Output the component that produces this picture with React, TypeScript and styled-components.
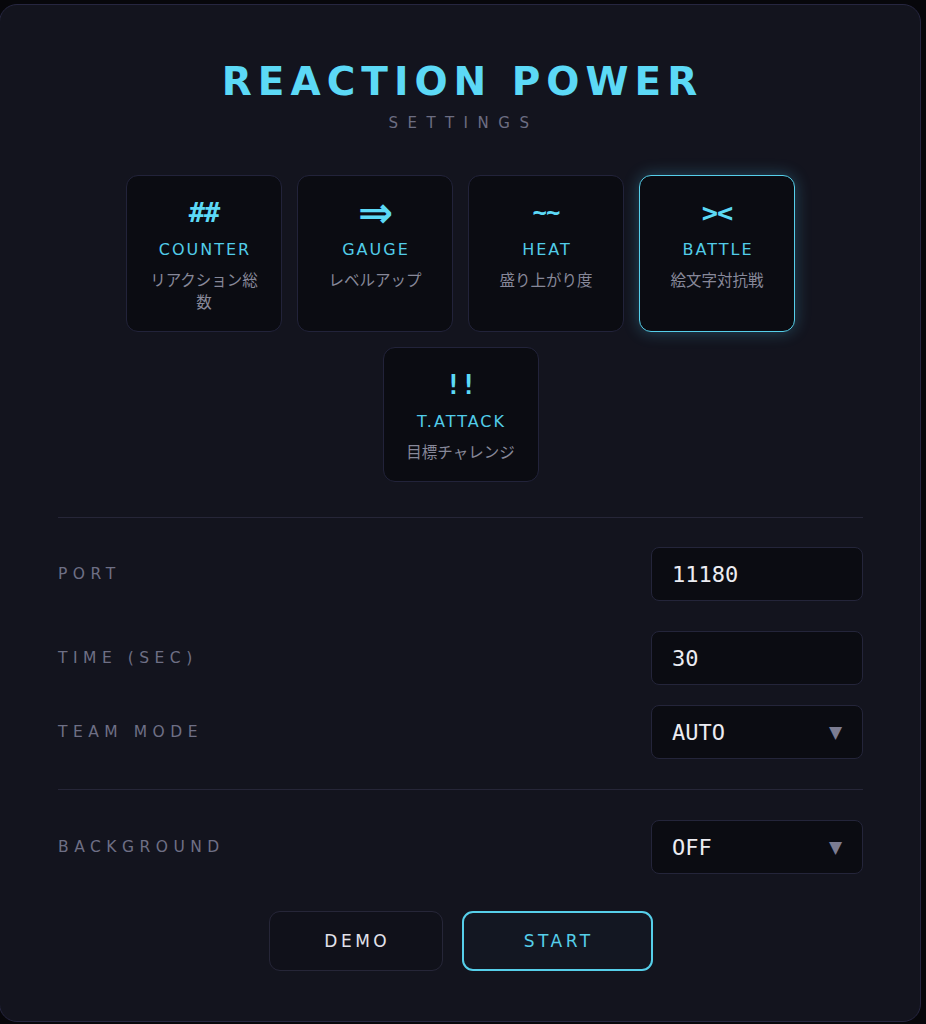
import styled, { createGlobalStyle } from "styled-components";

const GlobalStyle = createGlobalStyle`
  body {
    margin: 0;
    background: #07070b;
    font-family: "DejaVu Sans", "Noto Sans CJK JP", sans-serif;
  }
`;

type Mode = {
  icon: string;
  label: string;
  desc: string;
  iconSize?: number;
  wideIcon?: boolean;
  selected?: boolean;
};

const modes: Mode[] = [
  { icon: "##", label: "COUNTER", desc: "リアクション総数" },
  { icon: "⇒", label: "GAUGE", desc: "レベルアップ", iconSize: 42, wideIcon: true },
  { icon: "~~", label: "HEAT", desc: "盛り上がり度", iconSize: 24 },
  { icon: "><", label: "BATTLE", desc: "絵文字対抗戦", selected: true },
  { icon: "!!", label: "T.ATTACK", desc: "目標チャレンジ" },
];

const App = () => {
  return (
    <>
      <GlobalStyle />
      <Panel>
        <Title>REACTION POWER</Title>
        <Subtitle>SETTINGS</Subtitle>

        <ModeGrid>
          {modes.map((m) => (
            <ModeCard key={m.label} $selected={m.selected}>
              <ModeIcon $size={m.iconSize} $wide={m.wideIcon}>
                {m.icon}
              </ModeIcon>
              <ModeLabel>{m.label}</ModeLabel>
              <ModeDesc>{m.desc}</ModeDesc>
            </ModeCard>
          ))}
        </ModeGrid>

        <Divider $top={35} />

        <Row $top={29}>
          <Label>PORT</Label>
          <Field>11180</Field>
        </Row>
        <Row $top={30}>
          <Label>TIME (SEC)</Label>
          <Field>30</Field>
        </Row>
        <Row $top={20}>
          <Label>TEAM MODE</Label>
          <Field>
            AUTO
            <Caret>▼</Caret>
          </Field>
        </Row>

        <Divider $top={30} />

        <Row $top={30}>
          <Label>BACKGROUND</Label>
          <Field>
            OFF
            <Caret>▼</Caret>
          </Field>
        </Row>

        <Actions>
          <ActionButton $width={174}>DEMO</ActionButton>
          <ActionButton $width={191} $primary>
            START
          </ActionButton>
        </Actions>
      </Panel>
    </>
  );
};

export default App;

const Panel = styled.div`
  box-sizing: border-box;
  width: 922px;
  height: 1018px;
  margin-top: 4px;
  margin-left: -1px;
  padding: 54px 57px 0 58px;

  background: #13141e;
  border: 1px solid #262640;
  border-radius: 18px;

  display: flex;
  flex-direction: column;
`;

const Title = styled.div`
  text-align: center;
  font-size: 39px;
  line-height: 46px;
  font-weight: 700;
  letter-spacing: 6px;
  padding-left: 4px;
  color: #5cd9f6;
`;

const Subtitle = styled.div`
  margin-top: 8px;
  text-align: center;
  font-size: 15px;
  line-height: 20px;
  letter-spacing: 9.5px;
  padding-left: 6px;
  color: #6c6d82;
`;

const ModeGrid = styled.div`
  margin-top: 42px;
  display: flex;
  flex-wrap: wrap;
  justify-content: center;
  gap: 15px;
`;

const ModeCard = styled.div<{ $selected?: boolean }>`
  box-sizing: border-box;
  width: 156px;
  padding: 17px 17px 19px;

  display: flex;
  flex-direction: column;
  align-items: center;
  text-align: center;

  background: #0b0c12;
  border: 1.5px solid ${(p) => (p.$selected ? "#56cfea" : "#22233a")};
  border-radius: 12px;
  box-shadow: ${(p) =>
    p.$selected ? "0 0 16px rgba(80, 200, 240, 0.3)" : "none"};
`;

const ModeIcon = styled.div<{ $size?: number; $wide?: boolean }>`
  height: 40px;
  line-height: 40px;
  font-family: ${(p) =>
    p.$wide ? '"DejaVu Sans", sans-serif' : '"DejaVu Sans Mono", monospace'};
  font-size: ${(p) => p.$size ?? 27}px;
  font-weight: 700;
  letter-spacing: -1px;
  color: #5cd9f6;
`;

const ModeLabel = styled.div`
  margin-top: 7px;
  line-height: 20px;
  font-size: 16px;
  letter-spacing: 2px;
  padding-left: 2px;
  color: #52cde9;
`;

const ModeDesc = styled.div`
  margin-top: 8px;
  line-height: 22px;
  font-family: "Noto Sans CJK JP", sans-serif;
  font-size: 15.5px;
  color: #878899;
`;

const Divider = styled.div<{ $top: number }>`
  margin-top: ${(p) => p.$top}px;
  height: 1px;
  background: #262638;
`;

const Row = styled.div<{ $top: number }>`
  margin-top: ${(p) => p.$top}px;
  display: flex;
  align-items: center;
  justify-content: space-between;
`;

const Label = styled.div`
  font-size: 15.5px;
  letter-spacing: 5.5px;
  color: #6e6f85;
`;

const Field = styled.div`
  box-sizing: border-box;
  width: 212px;
  height: 54px;
  padding: 0 20px;

  display: flex;
  align-items: center;
  justify-content: space-between;

  background: #0b0c12;
  border: 1.5px solid #24253a;
  border-radius: 8px;

  font-family: "DejaVu Sans Mono", monospace;
  font-size: 22px;
  color: #ececf2;
`;

const Caret = styled.span`
  font-family: "DejaVu Sans", sans-serif;
  font-size: 17px;
  color: #7c7d92;
`;

const Actions = styled.div`
  margin-top: 37px;
  display: flex;
  justify-content: center;
  gap: 19px;
`;

const ActionButton = styled.div<{ $width: number; $primary?: boolean }>`
  box-sizing: border-box;
  width: ${(p) => p.$width}px;
  height: 60px;

  display: flex;
  justify-content: center;
  align-items: center;

  background: ${(p) => (p.$primary ? "#131722" : "#10111a")};
  border: ${(p) => (p.$primary ? "2px solid #56cfea" : "1.5px solid #262638")};
  border-radius: 11px;

  font-size: 17px;
  letter-spacing: 3.5px;
  padding-left: 3.5px;
  color: ${(p) => (p.$primary ? "#56cfea" : "#e2e2ea")};
`;
